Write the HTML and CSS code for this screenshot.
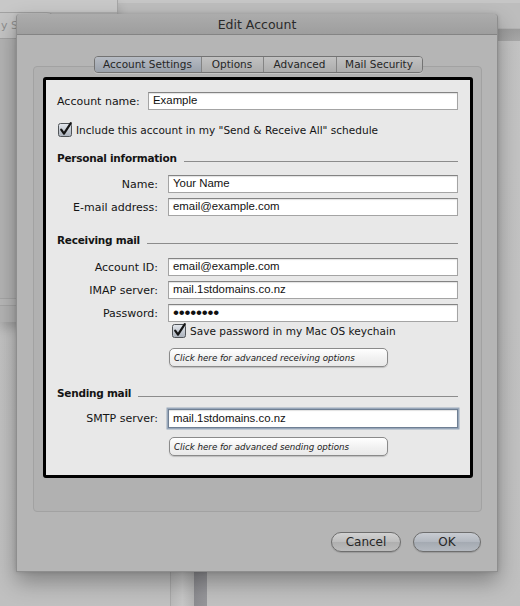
FILE: index.html
```html
<!DOCTYPE html>
<html>
<head>
<meta charset="utf-8">
<title>Edit Account</title>
<link rel="stylesheet" href="styles.css">
</head>
<body>
<div class="desktop">
  <div class="bg-top"></div>
  <div class="bg-win-left">
    <div class="search-field"><span class="search-text">y Se</span></div>
    <div class="bg-win-band"></div>
  </div>
  <div class="bg-band-right"></div>
  <div class="bg-strip"><div class="strip-light"></div><div class="strip-dark"></div></div>

  <div class="dialog">
    <div class="titlebar">Edit Account</div>
    <div class="dialog-body">
      <div class="tabs">
        <div class="tab tab-1 selected">Account Settings</div>
        <div class="tab tab-2">Options</div>
        <div class="tab tab-3">Advanced</div>
        <div class="tab tab-4">Mail Security</div>
      </div>
      <div class="panel">
        <div class="spot">
          <div class="row row-top">
            <label class="label-wide">Account name:</label>
            <div class="field field-wide">Example</div>
          </div>

          <div class="check-row check-main">
            <svg class="checkbox" width="15" height="15" viewBox="0 0 15 15">
              <defs>
                <linearGradient id="cb1" x1="0" y1="0" x2="0" y2="1">
                  <stop offset="0" stop-color="#e4e8ee"/>
                  <stop offset="1" stop-color="#a9b0ba"/>
                </linearGradient>
              </defs>
              <rect x="0.5" y="1.5" width="13" height="13" rx="2" fill="url(#cb1)" stroke="#505458"/>
              <path d="M3.2 7.6 L6 11.6 L12.8 1.2" fill="none" stroke="#151515" stroke-width="2.2" stroke-linecap="round" stroke-linejoin="round"/>
            </svg>
            <span class="check-text">Include this account in my "Send &amp; Receive All" schedule</span>
          </div>

          <div class="heading h-personal"><span>Personal information</span><div class="rule"></div></div>

          <div class="row row-first">
            <label class="label">Name:</label>
            <div class="field">Your Name</div>
          </div>
          <div class="row">
            <label class="label">E-mail address:</label>
            <div class="field">email@example.com</div>
          </div>

          <div class="heading h-receiving"><span>Receiving mail</span><div class="rule"></div></div>

          <div class="row row-first-r">
            <label class="label">Account ID:</label>
            <div class="field">email@example.com</div>
          </div>
          <div class="row">
            <label class="label">IMAP server:</label>
            <div class="field">mail.1stdomains.co.nz</div>
          </div>
          <div class="row">
            <label class="label">Password:</label>
            <div class="field password">••••••••</div>
          </div>

          <div class="check-row check-sub">
            <svg class="checkbox" width="15" height="15" viewBox="0 0 15 15">
              <defs>
                <linearGradient id="cb2" x1="0" y1="0" x2="0" y2="1">
                  <stop offset="0" stop-color="#e4e8ee"/>
                  <stop offset="1" stop-color="#a9b0ba"/>
                </linearGradient>
              </defs>
              <rect x="0.5" y="1.5" width="13" height="13" rx="2" fill="url(#cb2)" stroke="#505458"/>
              <path d="M3.2 7.6 L6 11.6 L12.8 1.2" fill="none" stroke="#151515" stroke-width="2.2" stroke-linecap="round" stroke-linejoin="round"/>
            </svg>
            <span class="check-text">Save password in my Mac OS keychain</span>
          </div>

          <div class="btn-row btn-recv">
            <button class="adv-btn">Click here for advanced receiving options</button>
          </div>

          <div class="heading h-sending"><span>Sending mail</span><div class="rule"></div></div>

          <div class="row row-smtp">
            <label class="label">SMTP server:</label>
            <div class="field focused">mail.1stdomains.co.nz</div>
          </div>

          <div class="btn-row btn-send">
            <button class="adv-btn">Click here for advanced sending options</button>
          </div>
        </div>
      </div>
      <div class="actions">
        <button class="pill pill-cancel">Cancel</button>
        <button class="pill pill-ok">OK</button>
      </div>
    </div>
  </div>
</div>
</body>
</html>
```

FILE: styles.css
```css
* { box-sizing: border-box; }
html, body { margin: 0; padding: 0; }
body {
  font-family: "DejaVu Sans", sans-serif;
  background: #c2c2c2;
}
.desktop {
  position: relative;
  width: 520px;
  height: 606px;
  overflow: hidden;
  background: linear-gradient(#c4c4c4, #c0c0c0);
}

/* background desktop pieces */
.bg-top {
  position: absolute;
  left: 118px; top: 0; width: 402px; height: 29px;
  background: #bdbdbd;
  border-top: 3px solid #c6c6c6;
  border-bottom: 1px solid #b3b3b3;
}
.bg-win-left {
  position: absolute;
  left: 0; top: 0; width: 118px; height: 322px;
  background: #b3b3b3;
  border-right: 1px solid #a6a6a6;
  box-shadow: 0 6px 10px rgba(0,0,0,0.18);
}
.bg-win-left::before {
  content: "";
  display: block;
  height: 12px;
  background: #c8c8c8;
}
.search-field {
  position: absolute;
  left: -12px; top: 12px; width: 67px; height: 27px;
  background: #c4c4c4;
  border: 1px solid #a2a2a2;
  border-radius: 0 8px 8px 0;
}
.search-text {
  position: absolute;
  left: 12px; top: 6px;
  font-size: 11px;
  color: #8e8e8e;
}
.bg-win-band {
  position: absolute;
  left: 0; top: 298px; width: 118px; height: 8px;
  border-top: 1px solid #a5a5a5;
  border-bottom: 1px solid #a5a5a5;
  background: #b7b7b7;
}
.bg-band-right {
  position: absolute;
  left: 490px; top: 29px; width: 30px; height: 12px;
  background: linear-gradient(#9c9c9c, #a8a8a8);
}
.bg-strip {
  position: absolute;
  left: 170px; top: 560px; width: 37px; height: 46px;
  display: flex;
}
.strip-light {
  width: 24px;
  background: linear-gradient(90deg, #b9b9b9, #c6c6c6 50%, #b4b4b4);
  border-left: 1px solid #a8a8a8;
}
.strip-dark {
  width: 13px;
  background: linear-gradient(90deg, #8c8c90, #96969a);
}

/* dialog */
.dialog {
  position: absolute;
  left: 16px; top: 14px;
  width: 482px; height: 558px;
  background: #b5b5b5;
  border: 1px solid #8e8e8e;
  border-top: none;
  border-radius: 4px 4px 0 0;
  box-shadow: 0 10px 22px rgba(0,0,0,0.32), 0 0 4px rgba(0,0,0,0.15);
  display: flex;
  flex-direction: column;
}
.titlebar {
  height: 21px;
  background: linear-gradient(#acacac, #9e9e9e);
  border-bottom: 1px solid #848484;
  border-radius: 4px 4px 0 0;
  text-align: center;
  font-size: 12.5px;
  line-height: 22px;
  color: #2a2a2a;
}
.dialog-body {
  padding: 21px 15px 0 16px;
  display: flex;
  flex-direction: column;
}

/* tabs */
.tabs {
  position: relative;
  z-index: 2;
  align-self: center;
  display: flex;
  height: 17px;
  margin-left: 1px;
  border: 1px solid #737373;
  border-radius: 4px;
  overflow: hidden;
  box-shadow: 0 1px 0 rgba(255,255,255,0.25);
}
.tab {
  height: 15px;
  line-height: 15px;
  text-align: center;
  font-size: 10.5px;
  color: #262626;
  background: linear-gradient(#c2c2c2, #acacac);
  border-left: 1px solid #848484;
}
.tab.selected {
  border-left: none;
  background: linear-gradient(#b7bcc4, #9aa1ab);
}
.tab-1 { width: 106px; }
.tab-2 { width: 62px; }
.tab-3 { width: 73px; }
.tab-4 { width: 86px; }

.panel {
  margin-top: -7px;
  width: 449px;
  height: 446px;
  background: #b1b1b1;
  border: 1px solid #a2a2a2;
  border-radius: 4px;
  padding: 10px 0 0 9px;
}
.spot {
  width: 430px;
  height: 401px;
  border: 3px solid #000;
  border-radius: 3px;
  background: #e8e8e8;
  padding: 12px 12px 0 11px;
  display: flex;
  flex-direction: column;
  color: #141414;
}

/* form */
.row {
  display: flex;
  align-items: center;
  height: 18px;
  margin-top: 5px;
}
.row-top { margin-top: 0; }
.label, .label-wide {
  font-size: 11px;
  white-space: nowrap;
}
.label-wide { width: 91px; }
.label {
  width: 101px;
  text-align: right;
  margin-right: 10px;
}
.field {
  width: 290px;
  height: 18px;
  background: #fff;
  border: 1px solid #a4a4a4;
  border-top-color: #838383;
  box-shadow: inset 0 1px 1px rgba(0,0,0,0.12);
  font-family: "Liberation Sans", Arial, sans-serif;
  font-size: 11.4px;
  line-height: 15px;
  padding-left: 4px;
  color: #111;
  white-space: nowrap;
}
.field-wide { width: 310px; }
.password {
  font-size: 17px;
  line-height: 15px;
  letter-spacing: -0.2px;
}
.focused {
  height: 19px;
  border: 1px solid #6f7f93;
  box-shadow: 0 0 0 1.5px #98a7ba, inset 0 1px 1px rgba(0,0,0,0.12);
  line-height: 16px;
}

.check-row {
  display: flex;
  align-items: center;
  height: 15px;
}
.check-main { margin-top: 12px; margin-left: 1px; }
.check-sub { margin-top: 1px; margin-left: 115px; }
.checkbox { flex: none; }
.check-text {
  font-size: 10.55px;
  margin-left: 3px;
  margin-top: 1px;
  white-space: nowrap;
}

.heading {
  display: flex;
  align-items: flex-start;
  height: 14px;
  font-size: 10.5px;
  font-weight: bold;
  letter-spacing: -0.25px;
  line-height: 14px;
}
.heading .rule {
  flex: 1;
  margin-top: 10px;
  margin-left: 7px;
  border-top: 1px solid #8c8c8c;
}
.h-personal { margin-top: 14px; }
.h-receiving { margin-top: 17px; }
.h-sending { margin-top: 19px; }
.row-first { margin-top: 10px; }
.row-first-r { margin-top: 11px; }
.row-smtp { margin-top: 9px; height: 19px; }

.btn-row { display: flex; margin-left: 112px; }
.btn-recv { margin-top: 10px; }
.btn-send { margin-top: 9px; }
.adv-btn {
  width: 219px;
  height: 19px;
  margin: 0;
  padding: 0 0 0 4px;
  text-align: left;
  font-family: "DejaVu Sans", sans-serif;
  font-style: italic;
  font-size: 8.7px;
  color: #1a1a1a;
  background: linear-gradient(#ffffff, #f1f1f1 55%, #e9e9e9);
  border: 1px solid #8a8a8a;
  border-radius: 5px;
  box-shadow: 0 1px 1px rgba(0,0,0,0.18);
}

/* bottom buttons */
.actions {
  display: flex;
  justify-content: flex-end;
  gap: 12px;
  margin-top: 20px;
  padding-right: 1px;
}
.pill {
  height: 20px;
  margin: 0;
  padding: 0;
  font-family: "DejaVu Sans", sans-serif;
  font-size: 12px;
  color: #262626;
  border: 1px solid #6e6e6e;
  border-radius: 10px;
  background: linear-gradient(#d2d2d2, #bdbdbd 50%, #afafaf 51%, #bcbcbc);
  box-shadow: 0 1px 1px rgba(0,0,0,0.15);
}
.pill-cancel { width: 70px; }
.pill-ok {
  width: 68px;
  background: linear-gradient(#c8ccd2, #b2b7bf 50%, #a4aab2 51%, #b4b9c0);
}
```
